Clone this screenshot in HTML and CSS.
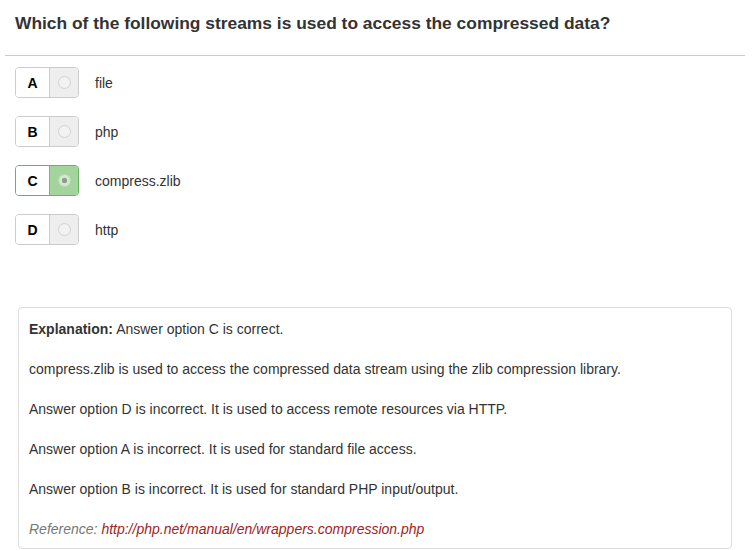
FILE: index.html
```html
<!DOCTYPE html>
<html>
<head>
<meta charset="utf-8">
<link rel="stylesheet" href="styles.css">
</head>
<body>
<div class="page">
  <h1 class="question">Which of the following streams is used to access the compressed data?</h1>
  <hr class="divider">
  <ul class="options">
    <li class="option">
      <span class="choice"><span class="letter">A</span><span class="radio"><span class="dot"></span></span></span>
      <span class="text">file</span>
    </li>
    <li class="option">
      <span class="choice"><span class="letter">B</span><span class="radio"><span class="dot"></span></span></span>
      <span class="text">php</span>
    </li>
    <li class="option">
      <span class="choice"><span class="letter">C</span><span class="radio checked"><span class="dot"></span></span></span>
      <span class="text">compress.zlib</span>
    </li>
    <li class="option">
      <span class="choice"><span class="letter">D</span><span class="radio"><span class="dot"></span></span></span>
      <span class="text">http</span>
    </li>
  </ul>
  <div class="explanation">
    <p><b>Explanation:</b> Answer option C is correct.</p>
    <p>compress.zlib is used to access the compressed data stream using the zlib compression library.</p>
    <p>Answer option D is incorrect. It is used to access remote resources via HTTP.</p>
    <p>Answer option A is incorrect. It is used for standard file access.</p>
    <p>Answer option B is incorrect. It is used for standard PHP input/output.</p>
    <p class="ref">Reference: <a href="#">http://php.net/manual/en/wrappers.compression.php</a></p>
  </div>
</div>
</body>
</html>
```
FILE: styles.css
```css
html, body {
  margin: 0;
  padding: 0;
  background: #fff;
}
body {
  font-family: "Liberation Sans", Arial, sans-serif;
  color: #333;
  font-size: 14px;
}
.page {
  width: 756px;
}
.question {
  margin: 0;
  padding: 12px 15px 0 15px;
  font-size: 17.4px;
  line-height: 22px;
  font-weight: bold;
  color: #333;
}
.divider {
  margin: 21px 11px 0 5px;
  border: 0;
  border-top: 1px solid #ccc;
  height: 0;
}
.options {
  list-style: none;
  margin: 11px 0 0 0;
  padding: 0 0 0 15px;
}
.option {
  display: flex;
  align-items: center;
  height: 31px;
  margin-bottom: 18px;
}
.choice {
  display: flex;
  width: 62px;
  height: 29px;
  border: 1px solid #ccc;
  border-radius: 4px;
  overflow: hidden;
}
.letter {
  width: 33px;
  display: flex;
  align-items: center;
  justify-content: center;
  font-weight: bold;
  font-size: 14px;
  color: #000;
  background: #fff;
}
.radio {
  flex: 1;
  display: flex;
  align-items: center;
  justify-content: center;
  background: #eee;
  border-left: 1px solid #ccc;
}
.radio.checked {
  background: #a4d49e;
  border-left-color: #7cb974;
}
.choice:has(.checked) {
  border-color: #6bb163;
}
.dot {
  width: 13px;
  height: 13px;
  border-radius: 50%;
  border: 1px solid #d2d2d2;
  background: #f2f2f2;
  box-sizing: border-box;
}
.checked .dot {
  border-color: #b9dcb4;
  background: radial-gradient(circle, #8d9e8a 0 2.5px, #d3e8cf 3px);
}
.text {
  margin-left: 16px;
  font-size: 14px;
  color: #333;
}
.explanation {
  margin: 62px 24px 0 18px;
  border: 1px solid #ddd;
  border-radius: 4px;
  padding: 11px 10px 0 10px;
  height: 229px;
}
.explanation p {
  margin: 0 0 20px 0;
  line-height: 20px;
  font-size: 14px;
  color: #333;
}
.explanation p.ref {
  font-style: italic;
  color: #777;
  margin-bottom: 0;
}
.ref a {
  color: #a02323;
  text-decoration: none;
}
```
